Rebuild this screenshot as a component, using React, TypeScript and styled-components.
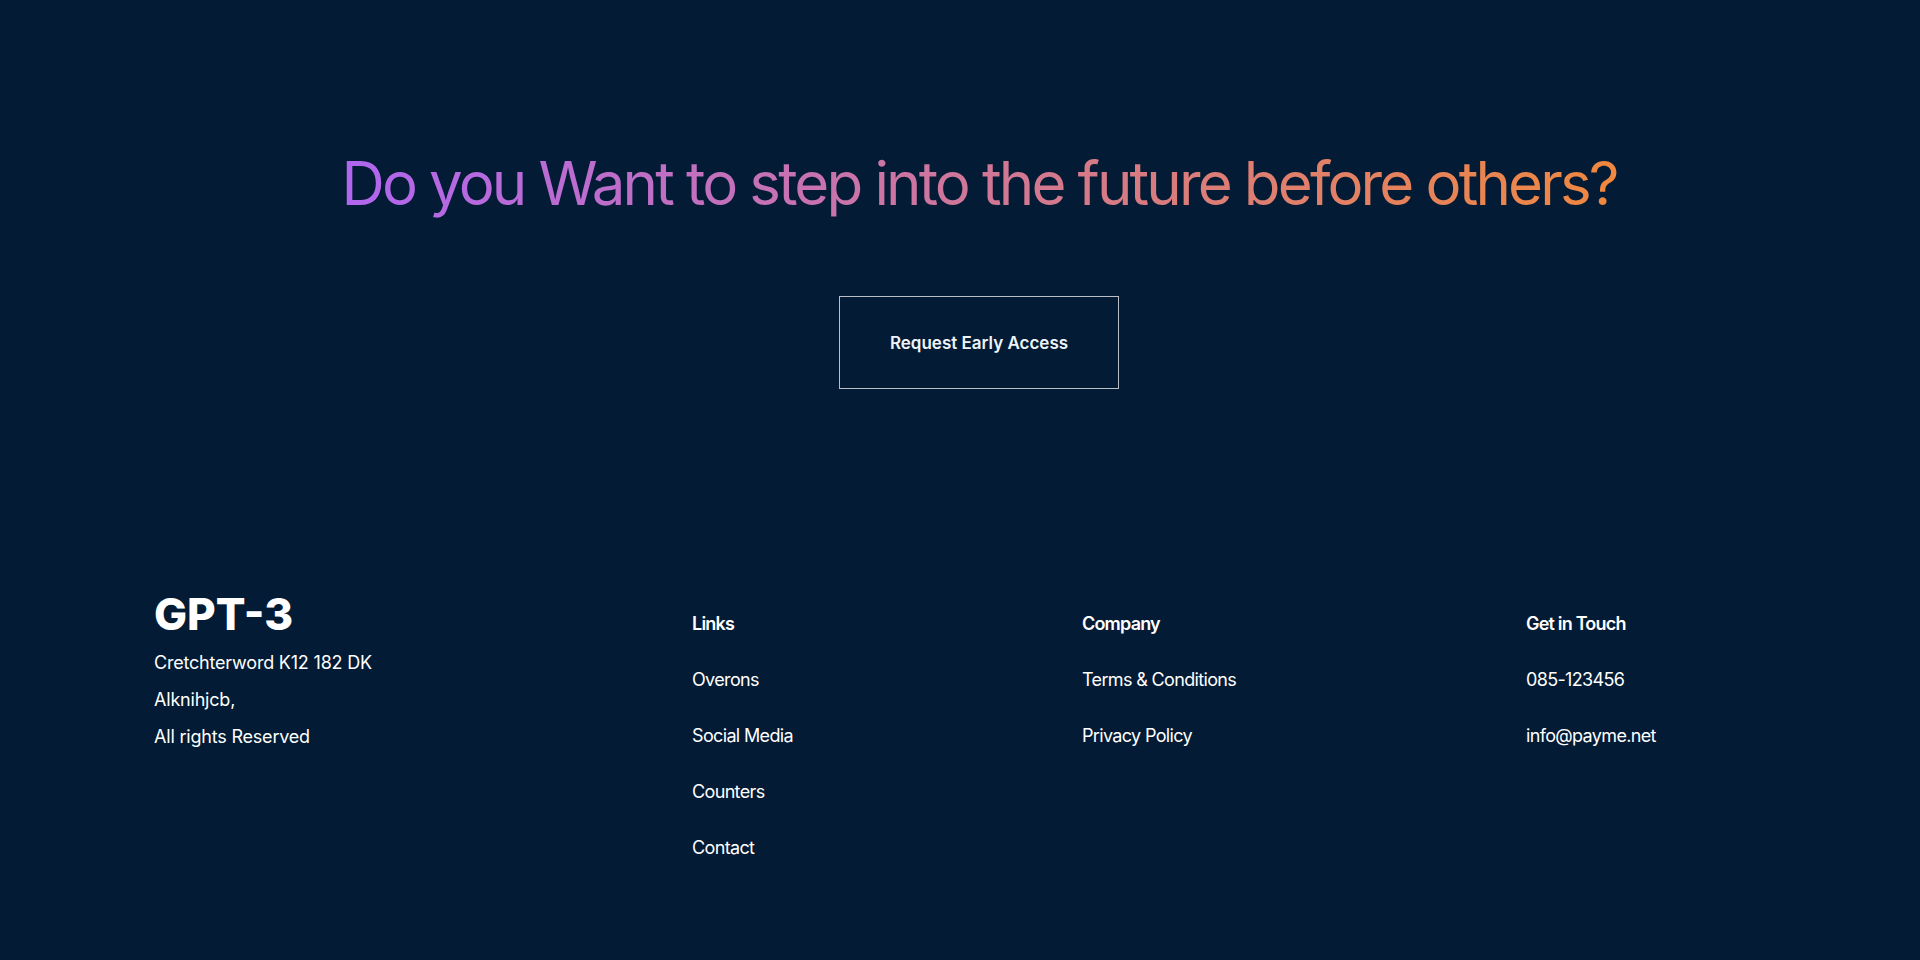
import React from "react";
import styled, { createGlobalStyle } from "styled-components";

const Global = createGlobalStyle`
  html, body { margin: 0; padding: 0; background: #031B34; }
  * { box-sizing: border-box; }
  body { font-family: Inter, "Noto Sans", sans-serif; color: #fff; }
`;

const Page = styled.footer`
  min-height: 100vh;
  background: #031B34;
  display: flex;
  flex-direction: column;
  padding-top: 146px;
`;

const Hero = styled.div`
  display: flex;
  flex-direction: column;
  align-items: center;
  padding-left: 38px;
`;

const Heading = styled.h1`
  margin: 0;
  font-family: Inter, sans-serif;
  font-weight: 400;
  font-size: 60px;
  line-height: 75px;
  letter-spacing: -2.85px;
  text-align: center;
  background: linear-gradient(90deg, #b066f0 0%, #f0883f 100%);
  -webkit-background-clip: text;
  background-clip: text;
  color: transparent;
`;

const CtaButton = styled.button`
  margin-top: 75px;
  width: 280px;
  height: 93px;
  background: transparent;
  border: 1px solid rgba(255, 255, 255, 0.72);
  color: #eef3f8;
  font-family: Inter, sans-serif;
  font-weight: 600;
  font-size: 17px;
  cursor: pointer;
`;

const Links = styled.div`
  margin-top: 203px;
  display: grid;
  grid-template-columns: 538px 390px 444px 1fr;
  padding-left: 154px;
  align-items: start;
`;

const Brand = styled.div`
  display: flex;
  flex-direction: column;
`;

const Logo = styled.div`
  font-family: Inter, sans-serif;
  font-weight: 800;
  font-size: 44px;
  line-height: 44px;
  margin-bottom: 8px;
`;

const Address = styled.p`
  margin: 0;
  font-size: 18px;
  line-height: 37px;
  letter-spacing: -0.2px;
  font-weight: 400;
`;

const Column = styled.div`
  display: flex;
  flex-direction: column;
  gap: 32px;
  padding-top: 20px;
`;

const ColTitle = styled.h4`
  margin: 0;
  font-size: 18px;
  line-height: 24px;
  letter-spacing: -0.8px;
  font-weight: 600;
`;

const ColLink = styled.p`
  margin: 0;
  font-size: 18px;
  line-height: 24px;
  letter-spacing: -0.65px;
  font-weight: 400;
  cursor: pointer;
`;

const columns = [
  { title: "Links", items: ["Overons", "Social Media", "Counters", "Contact"] },
  { title: "Company", items: ["Terms & Conditions", "Privacy Policy"] },
  { title: "Get in Touch", items: ["085-123456", "info@payme.net"] },
];

export default function App() {
  return (
    <>
      <Global />
      <Page>
        <Hero>
          <Heading>Do you Want to step into the future before others?</Heading>
          <CtaButton>Request Early Access</CtaButton>
        </Hero>
        <Links>
          <Brand>
            <Logo>GPT-3</Logo>
            <Address>Cretchterword K12 182 DK</Address>
            <Address>Alknihjcb,</Address>
            <Address>All rights Reserved</Address>
          </Brand>
          {columns.map((col) => (
            <Column key={col.title}>
              <ColTitle>{col.title}</ColTitle>
              {col.items.map((item) => (
                <ColLink key={item}>{item}</ColLink>
              ))}
            </Column>
          ))}
        </Links>
      </Page>
    </>
  );
}
